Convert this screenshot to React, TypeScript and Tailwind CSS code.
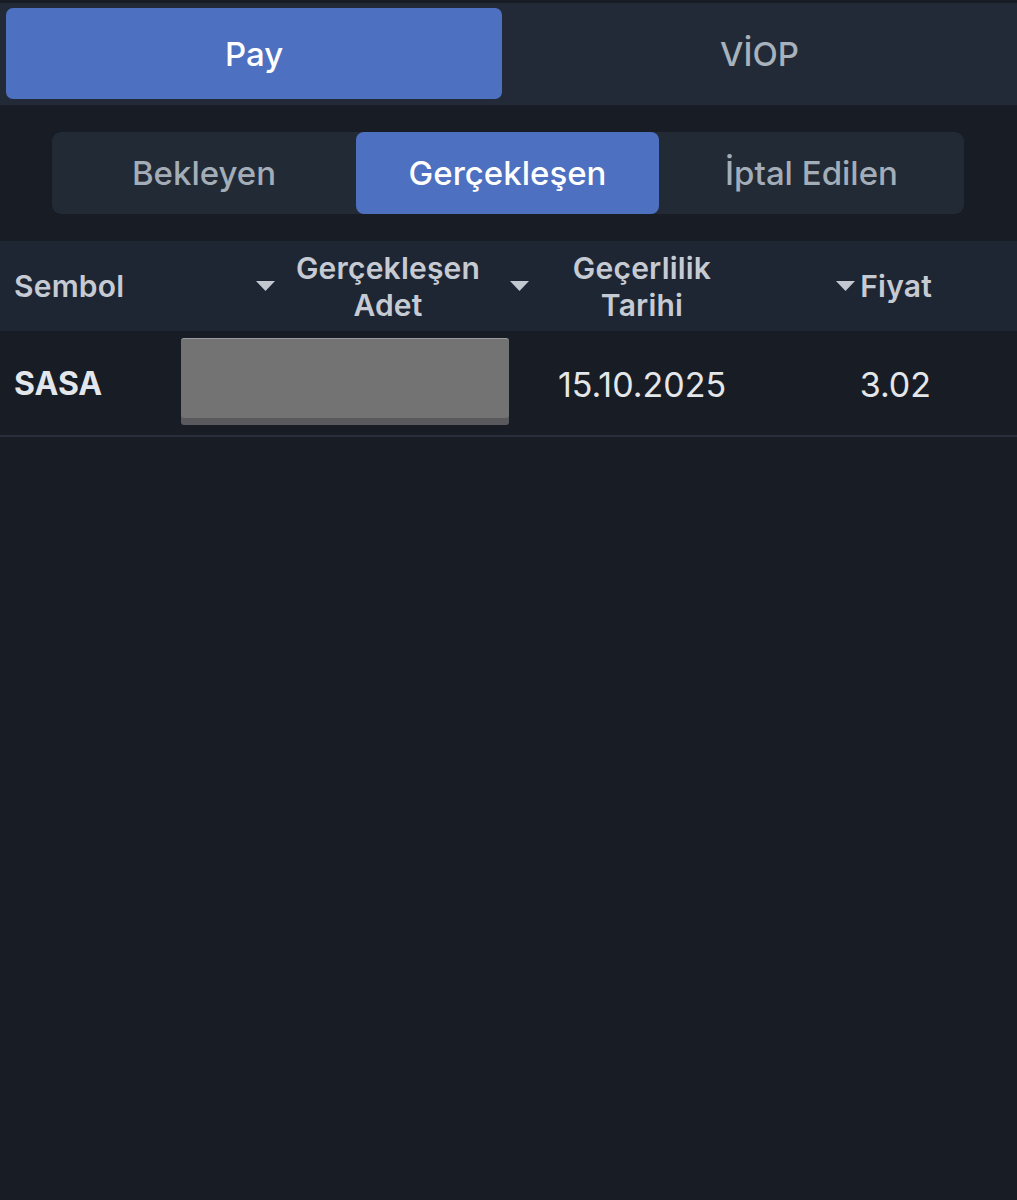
import React from "react";

const Arrow = () => (
  <svg width="19" height="11" viewBox="0 0 19 11" className="shrink-0">
    <path d="M0 0 L19 0 L9.5 10 Z" fill="#c3c8d0" />
  </svg>
);

export default function App() {
  return (
    <div
      className="w-[1017px] h-[1200px] bg-[#181c24] flex flex-col"
      style={{ fontFamily: "Inter, 'Noto Sans', sans-serif" }}
    >
      <div className="mt-[3px] h-[102px] bg-[#212a36] flex items-start pt-[5px] px-[6px]">
        <div className="w-[496px] h-[91px] rounded-[7px] bg-[#4d70c0] flex items-center justify-center pt-[3px] text-white text-[33px] font-medium">
          Pay
        </div>
        <div className="flex-1 h-[91px] flex items-center justify-center pt-[3px] pl-[6px] text-[#a7b2bd] text-[33px] font-medium">
          VİOP
        </div>
      </div>

      <div className="pt-[27px] px-[52px] pb-[27px]">
        <div className="w-[912px] h-[82px] rounded-[9px] bg-[#222a36] flex text-[33px] font-medium">
          <div className="w-[304px] flex items-center justify-center pt-[2px] text-[#a3adb8]">Bekleyen</div>
          <div className="w-[303px] rounded-[8px] bg-[#4d70c0] flex items-center justify-center pt-[2px] text-white">
            Gerçekleşen
          </div>
          <div className="flex-1 flex items-center justify-center pt-[2px] text-[#a3adb8]">İptal Edilen</div>
        </div>
      </div>

      <div className="h-[90px] bg-[#1f2633] flex items-center pt-[1px] text-[30px] font-semibold text-[#c6cbd3] leading-[37px] tracking-[0.2px]">
        <div className="w-[256px] pl-[14px]">Sembol</div>
        <div className="w-[20px] flex"><Arrow /></div>
        <div className="w-[224px] text-center">Gerçekleşen<br />Adet</div>
        <div className="w-[34px] flex pl-[10px]"><Arrow /></div>
        <div className="w-[216px] text-center">Geçerlilik<br />Tarihi</div>
        <div className="w-[182px] flex items-center justify-end gap-[5px]">
          <Arrow />
          <span>Fiyat</span>
        </div>
      </div>

      <div className="h-[106px] flex items-center border-b-2 border-[#2a303b] text-[34px]">
        <div className="w-[181px] pl-[14px] pt-[2px] font-bold text-[#e3e6ea] text-[32px]">SASA</div>
        <div className="w-[328px] h-[80px] mt-[-10px] rounded-[3px] bg-[#737373] border-t border-[#9a9aa0] shadow-[0_7px_0_#5a5a5e]"></div>
        <div className="w-[266px] text-center pt-[2px] text-[#e4e7ea]">15.10.2025</div>
        <div className="w-[156px] text-right pt-[2px] text-[#e4e7ea]">3.02</div>
      </div>
    </div>
  );
}
